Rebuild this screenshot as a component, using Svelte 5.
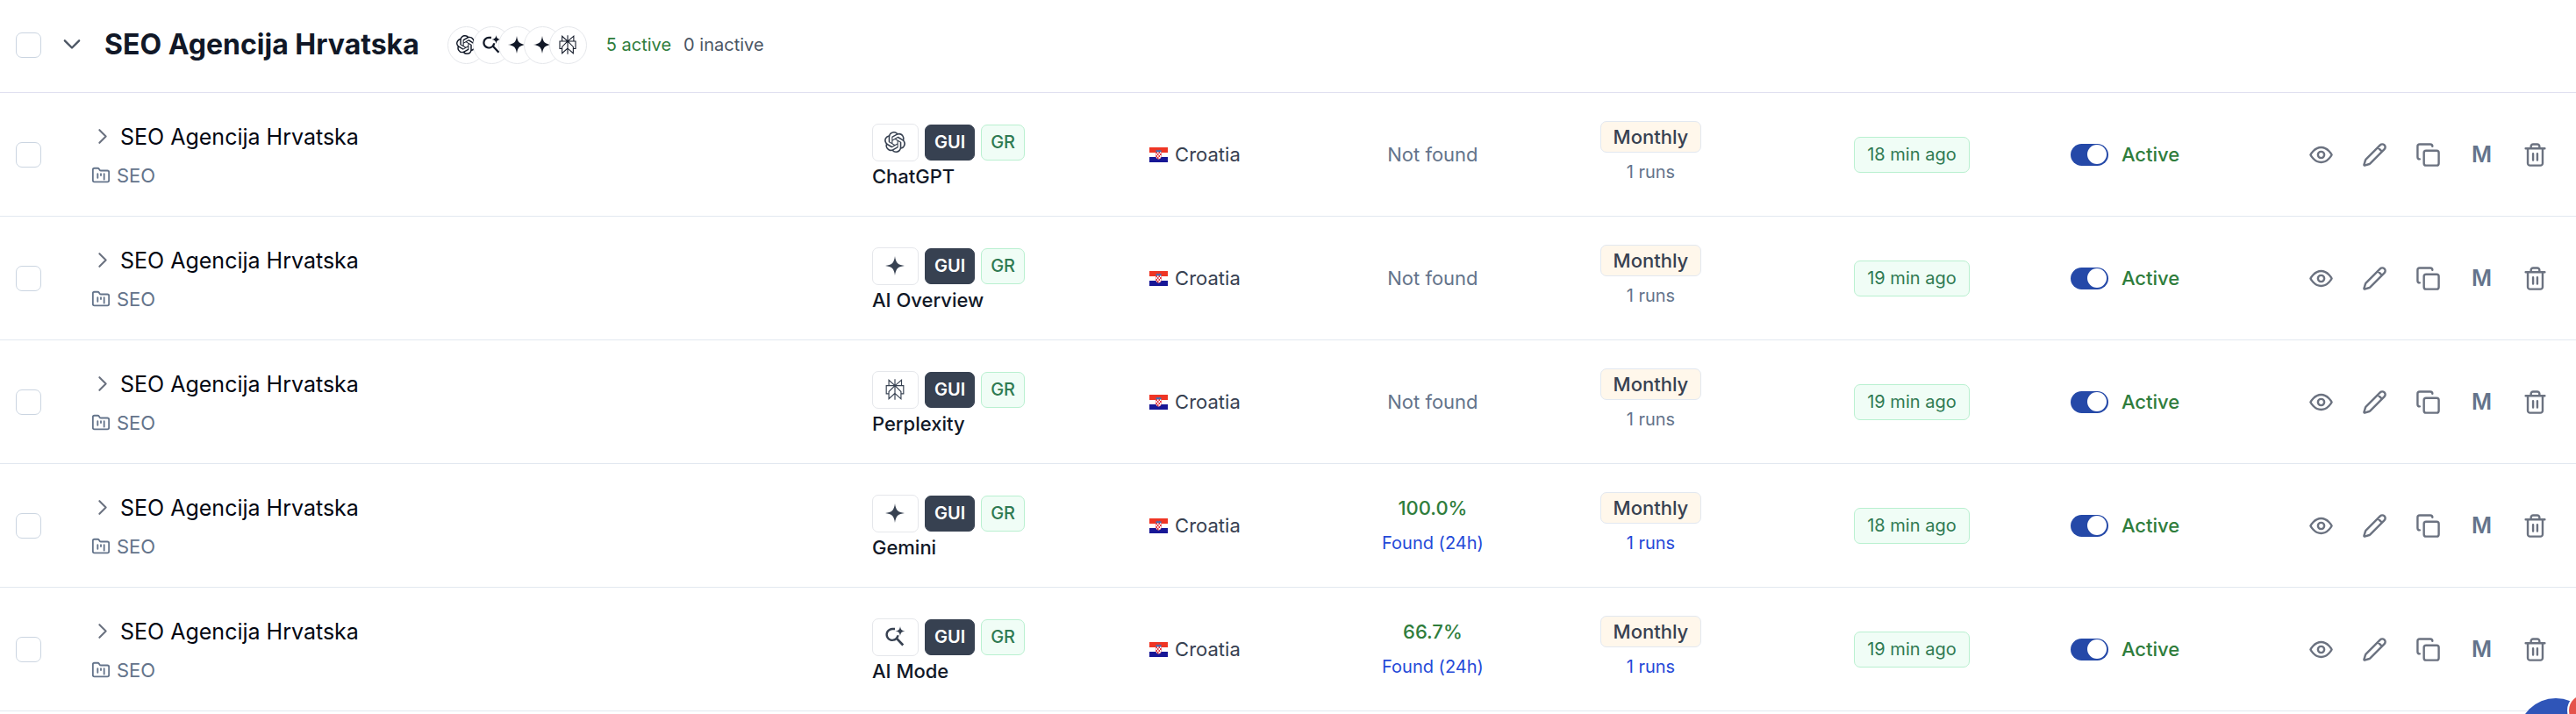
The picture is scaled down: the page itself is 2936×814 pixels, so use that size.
<script>
  const group = {
    title: 'SEO Agencija Hrvatska',
    active: 5,
    inactive: 0,
    engines: ['openai', 'aimode', 'sparkle', 'sparkle', 'perplexity'],
  };

  let rows = $state([
    { engine: 'ChatGPT', icon: 'openai', rate: null, updated: '18 min ago', active: true },
    { engine: 'AI Overview', icon: 'sparkle', rate: null, updated: '19 min ago', active: true },
    { engine: 'Perplexity', icon: 'perplexity', rate: null, updated: '19 min ago', active: true },
    { engine: 'Gemini', icon: 'sparkle', rate: '100.0%', updated: '18 min ago', active: true },
    { engine: 'AI Mode', icon: 'aimode', rate: '66.7%', updated: '19 min ago', active: true },
  ]);

  let open = $state(true);
</script>

{#snippet engineIcon(name)}
  <svg class="engine-icon" viewBox="0 0 24 24" fill="currentColor" aria-hidden="true">
    {#if name === 'openai'}
      <path d="M22.2819 9.8211a5.9847 5.9847 0 0 0-.5157-4.9108 6.0462 6.0462 0 0 0-6.5098-2.9A6.0651 6.0651 0 0 0 4.9807 4.1818a5.9847 5.9847 0 0 0-3.9977 2.9 6.0462 6.0462 0 0 0 .7427 7.0966 5.98 5.98 0 0 0 .511 4.9107 6.051 6.051 0 0 0 6.5146 2.9001A5.9847 5.9847 0 0 0 13.2599 24a6.0557 6.0557 0 0 0 5.7718-4.2058 5.9894 5.9894 0 0 0 3.9977-2.9001 6.0557 6.0557 0 0 0-.7475-7.0729zm-9.022 12.6081a4.4755 4.4755 0 0 1-2.8764-1.0408l.1419-.0804 4.7783-2.7582a.7948.7948 0 0 0 .3927-.6813v-6.7369l2.02 1.1686a.071.071 0 0 1 .038.052v5.5826a4.504 4.504 0 0 1-4.4945 4.4944zm-9.6607-4.1254a4.4708 4.4708 0 0 1-.5346-3.0137l.142.0852 4.783 2.7582a.7712.7712 0 0 0 .7806 0l5.8428-3.3685v2.3324a.0804.0804 0 0 1-.0332.0615L9.74 19.9502a4.4992 4.4992 0 0 1-6.1408-1.6464zM2.3408 7.8956a4.485 4.485 0 0 1 2.3655-1.9728V11.6a.7664.7664 0 0 0 .3879.6765l5.8144 3.3543-2.0201 1.1685a.0757.0757 0 0 1-.071 0l-4.8303-2.7865A4.504 4.504 0 0 1 2.3408 7.872zm16.5963 3.8558L13.1038 8.364 15.1192 7.2a.0757.0757 0 0 1 .071 0l4.8303 2.7913a4.4944 4.4944 0 0 1-.6765 8.1042v-5.6772a.79.79 0 0 0-.407-.667zm2.0107-3.0231l-.142-.0852-4.7735-2.7818a.7759.7759 0 0 0-.7854 0L9.409 9.2297V6.8974a.0662.0662 0 0 1 .0284-.0615l4.8303-2.7866a4.4992 4.4992 0 0 1 6.6802 4.66zM8.3065 12.863l-2.02-1.1638a.0804.0804 0 0 1-.038-.0567V6.0742a4.4992 4.4992 0 0 1 7.3757-3.4537l-.142.0805L8.704 5.459a.7948.7948 0 0 0-.3927.6813zm1.0976-2.3654l2.602-1.4998 2.6069 1.4998v2.9994l-2.5974 1.4997-2.6067-1.4997Z" />
    {:else if name === 'perplexity'}
      <path d="M22.3977 7.0896h-2.3106V.0676l-7.5094 6.3542V.1577h-1.1554v6.1966L4.4904 0v7.0896H1.6023v10.3976h2.8882V24l6.932-6.3591v6.2005h1.1554v-6.0469l6.9318 6.1807v-6.4879h2.8882V7.0896zm-3.4657-4.531v4.531h-5.355l5.355-4.531zm-13.2862.0676 4.8691 4.4634H5.6458V2.6262zM2.7576 16.332V8.245h7.8476l-6.1149 6.1147v1.9723H2.7576zm2.8882 5.0404v-3.8852h.0001v-2.6488l5.7763-5.7764v7.0111l-5.7764 5.2993zm12.7086.0248-5.7766-5.1509V9.0618l5.7766 5.7766v6.5588zm2.8882-5.0652h-1.733v-1.9723L13.3948 8.245h7.8478v8.087z" />
    {:else if name === 'aimode'}
      <path d="M12 1.8H9A7.6 7.6 0 1 0 13.7 15.4l6.6 7 1.9-1.8-6.7-7a7.6 7.6 0 0 0 1.2-3.4h-2.5A5.2 5.2 0 1 1 9 4.3h3z" />
      <path d="M18 0c.5 3.6 1.9 5 5.5 5.5-3.6.5-5 1.9-5.5 5.5-.5-3.6-1.9-5-5.5-5.5C16.1 5 17.5 3.6 18 0z" />
    {:else}
      <path d="M12 1c.4 3.3 1.3 6.3 2.9 8 1.8 1.7 4.8 2.6 8.1 3-3.3.4-6.3 1.3-8.1 3-1.6 1.7-2.5 4.7-2.9 8-.4-3.3-1.3-6.3-2.9-8-1.8-1.7-4.8-2.6-8.1-3 3.3-.4 6.3-1.3 8.1-3 1.6-1.7 2.5-4.7 2.9-8z" />
    {/if}
  </svg>
{/snippet}

<table>
  <colgroup>
    <col class="c-check" />
    <col />
    <col class="c-engine" />
    <col class="c-country" />
    <col class="c-found" />
    <col class="c-freq" />
    <col class="c-updated" />
    <col class="c-status" />
    <col class="c-actions" />
  </colgroup>
  <tbody>
    <tr class="group">
      <td class="check"><input type="checkbox" aria-label="Select group" /></td>
      <td colspan="8">
        <div class="group-head">
          <button class="toggle-group" aria-label="Toggle group" aria-expanded={open} onclick={() => (open = !open)}>
            <svg class:closed={!open} viewBox="0 0 24 24" class="line-icon chevron"><path d="m5 8 7 7 7-7" /></svg>
          </button>
          <h2>{group.title}</h2>
          <div class="stack">
            {#each group.engines as name}
              <span class="bubble">{@render engineIcon(name)}</span>
            {/each}
          </div>
          <div class="counts">
            <span class="green">{group.active} active</span>
            <span>{group.inactive} inactive</span>
          </div>
        </div>
      </td>
    </tr>

    {#if open}
      {#each rows as row}
        <tr>
          <td class="check"><input type="checkbox" aria-label="Select {row.engine}" /></td>
          <td class="name">
            <button class="prompt">
              <svg class="line-icon" viewBox="0 0 24 24"><path d="m9 5 7 7-7 7" /></svg>
              {group.title}
            </button>
            <div class="folder">
              <svg class="line-icon" viewBox="0 0 24 24">
                <path d="M4 20h16a2 2 0 0 0 2-2V8a2 2 0 0 0-2-2h-7.9a2 2 0 0 1-1.7-.9l-.8-1.2A2 2 0 0 0 7.9 3H4a2 2 0 0 0-2 2v13c0 1.1.9 2 2 2zM8 10v5M12 10v2M16 10v7" />
              </svg>
              <span>SEO</span>
            </div>
          </td>
          <td class="source">
            <div class="tags">
              <span class="tag logo">{@render engineIcon(row.icon)}</span>
              <span class="tag gui">GUI</span>
              <span class="tag gr">GR</span>
            </div>
            <div class="engine">{row.engine}</div>
          </td>
          <td class="center">
            <div class="country">
              <svg class="flag" viewBox="0 0 21 17" aria-hidden="true">
                <path fill="#fff" d="M0 0h21v17H0z" />
                <path fill="#ef3524" d="M0 0h21v6H0z" />
                <path fill="#171796" d="M0 11h21v6H0z" />
                <path fill="#fff" stroke="#e0414a" stroke-width=".5" d="M7.5 5h6v5q0 3-3 3.5-3-.5-3-3.5z" />
                <path fill="#e5303a" d="M7.5 5H9v2H7.5zM10.5 5H12v2h-1.5zM9 7h1.5v2H9zM12 7h1.5v2H12zM7.5 9H9v2H7.5zM10.5 9H12v2h-1.5zM9 11h1.5v2H9z" />
                <path fill="#3f6fb5" d="m7 3 1 1 1-1.5 1.5 1 1.5-1L13 4l1-1-.5 2.2h-6z" />
              </svg>
              <span>Croatia</span>
            </div>
          </td>
          <td class="center">
            {#if row.rate}
              <div class="rate">{row.rate}</div>
              <a class="sub" href="#found">Found (24h)</a>
            {:else}
              <span class="muted">Not found</span>
            {/if}
          </td>
          <td class="center">
            <div class="freq">Monthly</div>
            {#if row.rate}
              <a class="sub" href="#runs">1 runs</a>
            {:else}
              <span class="sub">1 runs</span>
            {/if}
          </td>
          <td class="center"><span class="updated">{row.updated}</span></td>
          <td>
            <label class="status">
              <input type="checkbox" role="switch" bind:checked={row.active} />
              <span>{row.active ? 'Active' : 'Inactive'}</span>
            </label>
          </td>
          <td>
            <div class="actions">
              <button aria-label="View">
                <svg class="line-icon" viewBox="0 0 24 24"><path d="M2 12s3.5-7 10-7 10 7 10 7-3.5 7-10 7-10-7-10-7z" /><circle cx="12" cy="12" r="3" /></svg>
              </button>
              <button aria-label="Edit">
                <svg class="line-icon" viewBox="0 0 24 24"><path d="M21.2 6.8a2.8 2.8 0 0 0-4-4L3.8 16.2a2 2 0 0 0-.5.8L2 21.4a.5.5 0 0 0 .6.6L7 20.7a2 2 0 0 0 .8-.5zM15 5l4 4" /></svg>
              </button>
              <button aria-label="Duplicate">
                <svg class="line-icon" viewBox="0 0 24 24"><rect x="8" y="8" width="14" height="14" rx="2" /><path d="M4 16c-1.1 0-2-.9-2-2V4c0-1.1.9-2 2-2h10c1.1 0 2 .9 2 2" /></svg>
              </button>
              <button class="letter" aria-label="Move">M</button>
              <button aria-label="Delete">
                <svg class="line-icon" viewBox="0 0 24 24"><path d="M3 6h18M19 6v14c0 1-1 2-2 2H7c-1 0-2-1-2-2V6M8 6V4c0-1 1-2 2-2h4c1 0 2 1 2 2v2M10 11v6M14 11v6" /></svg>
              </button>
            </div>
          </td>
        </tr>
      {/each}
    {/if}
  </tbody>
</table>

<button class="chat" aria-label="Open chat">
  <svg viewBox="0 0 24 24" class="line-icon"><path d="M21 11.5a8.4 8.4 0 0 1-12.3 7.4L3 21l2.1-5.7A8.4 8.4 0 1 1 21 11.5z" /></svg>
  <span class="dot"></span>
</button>

<style>
:global(body) {
  background: #fff;
  font-family: Inter, "Liberation Sans", sans-serif;
  font-size: 22px;
  color: #374151;
  overflow: hidden;
}

table {
  width: 100%;
  table-layout: fixed;
  border-collapse: separate;
  border-spacing: 0;
}

.c-check { width: 64px; }
.c-engine { width: 229px; }
.c-country { width: 278px; }
.c-found { width: 264px; }
.c-freq { width: 233px; }
.c-updated { width: 362px; }
.c-status { width: 126px; }
.c-actions { width: 450px; }

td {
  box-sizing: border-box;
  height: 141px;
  padding: 0;
  border-bottom: 1px solid #e2e8f0;
  vertical-align: middle;
}

.group td {
  height: 106px;
  padding-bottom: 3px;
  border-color: #e0e0f0;
}

.center {
  text-align: center;
}

button {
  font: inherit;
  color: inherit;
  background: none;
  border: none;
  padding: 0;
  cursor: pointer;
}

a {
  text-decoration: none;
}

.line-icon {
  display: block;
  flex-shrink: 0;
  fill: none;
  stroke: currentColor;
  stroke-width: 2;
  stroke-linecap: round;
  stroke-linejoin: round;
}

.check input {
  appearance: none;
  display: block;
  width: 29px;
  height: 29px;
  margin: 0 auto;
  border: 1px solid #cbd5e1;
  border-radius: 7px;
  background: #fff;
}

.check input:checked {
  background: #2549a8;
}

.group-head {
  display: flex;
  align-items: center;
}

.toggle-group {
  width: 36px;
  margin-right: 19px;
  color: #4b5563;
}

.chevron {
  width: 28px;
  height: 28px;
  margin-left: 4px;
}

.closed {
  transform: rotate(-90deg);
}

h2 {
  margin: 0;
  font-size: 32px;
  font-weight: 700;
  line-height: 40px;
  color: #111827;
}

.stack {
  display: flex;
  margin-left: 32px;
  color: #111827;
}

.bubble {
  display: grid;
  place-items: center;
  box-sizing: border-box;
  width: 43px;
  height: 43px;
  border: 1px solid #e5e7eb;
  border-radius: 50%;
  background: #fff;
}

.bubble + .bubble {
  margin-left: -14px;
}

.engine-icon {
  display: block;
  width: 22px;
  height: 22px;
}

.counts {
  display: flex;
  gap: 14px;
  margin-left: 22px;
  font-size: 20px;
  color: #4b5563;
}

.green {
  color: #2f7d3c;
}

.name {
  padding: 3px 0 0 40px;
}

.prompt {
  display: flex;
  align-items: center;
  gap: 8px;
  font-size: 25px;
  line-height: 44px;
  color: #030712;
}

.prompt svg {
  width: 25px;
  height: 25px;
  color: #6b7280;
}

.folder {
  display: flex;
  align-items: center;
  gap: 7px;
  line-height: 44px;
  color: #64748b;
}

.folder svg {
  width: 22px;
  height: 22px;
}

.source {
  padding-top: 6px;
}

.tags {
  display: flex;
  align-items: center;
  gap: 7px;
}

.tag {
  display: grid;
  place-items: center;
  box-sizing: border-box;
  height: 41px;
  padding: 0 10px;
  border: 1px solid;
  border-radius: 7px;
  font-size: 20px;
  line-height: 28px;
}

.logo {
  width: 53px;
  height: 43px;
  border-color: #e5e7eb;
}

.logo .engine-icon {
  width: 24px;
  height: 24px;
}

.gui {
  background: #374151;
  border-color: #374151;
  color: #fff;
  font-weight: 600;
}

.gr {
  background: #f0fdf6;
  border-color: #b9f0d0;
  color: #2f7a52;
  font-weight: 500;
}

.engine {
  line-height: 34px;
  font-weight: 500;
  color: #111827;
}

.country {
  display: flex;
  align-items: center;
  justify-content: center;
  gap: 8px;
}

.flag {
  display: block;
  width: 21px;
  height: 17px;
}

.rate {
  line-height: 40px;
  font-weight: 500;
  color: #2f7d3c;
}

.muted {
  color: #64748b;
}

.freq {
  box-sizing: border-box;
  width: fit-content;
  margin: 2px auto;
  padding: 0 14px;
  border: 1px solid #e2e8f0;
  border-radius: 7px;
  background: #fff7eb;
  line-height: 34px;
  font-weight: 500;
}

.sub {
  display: block;
  font-size: 20px;
  line-height: 40px;
  color: #64748b;
}

a.sub {
  color: #2549d8;
}

.updated {
  display: inline-block;
  padding: 0 14px;
  border: 1px solid #b9f0d0;
  border-radius: 7px;
  background: #f0fdf6;
  font-size: 20px;
  line-height: 39px;
  color: #2f7a52;
}

.status {
  display: flex;
  align-items: center;
  gap: 15px;
  font-weight: 500;
  color: #2f7d3c;
}

.status input {
  appearance: none;
  display: flex;
  align-items: center;
  flex-shrink: 0;
  width: 43px;
  height: 25px;
  margin: 0;
  padding: 0 2px;
  box-sizing: border-box;
  border-radius: 13px;
  background: #94a3b8;
}

.status input::before {
  content: "";
  width: 22px;
  height: 22px;
  border-radius: 50%;
  background: #fff;
}

.status input:checked {
  justify-content: flex-end;
  background: #2549a8;
}

.actions {
  display: flex;
  justify-content: flex-end;
  padding-right: 16px;
  color: #6b7280;
}

.actions button {
  display: grid;
  place-items: center;
  width: 61px;
  height: 44px;
}

.actions svg {
  width: 29px;
  height: 29px;
}

.actions .letter {
  font-size: 25px;
  font-weight: 600;
  color: #64748b;
}

/* floating chat launcher, tucked into the corner */
.chat {
  position: fixed;
  right: -20px;
  bottom: -68px;
  display: grid;
  place-items: center;
  width: 86px;
  height: 86px;
  border-radius: 50%;
  background: #2f55b8;
  color: #fff;
}

.chat svg {
  width: 50px;
  height: 50px;
}

.dot {
  position: absolute;
  top: -6px;
  right: -10px;
  width: 36px;
  height: 36px;
  border: 2px solid #fff;
  border-radius: 50%;
  background: #e5534b;
}
</style>
